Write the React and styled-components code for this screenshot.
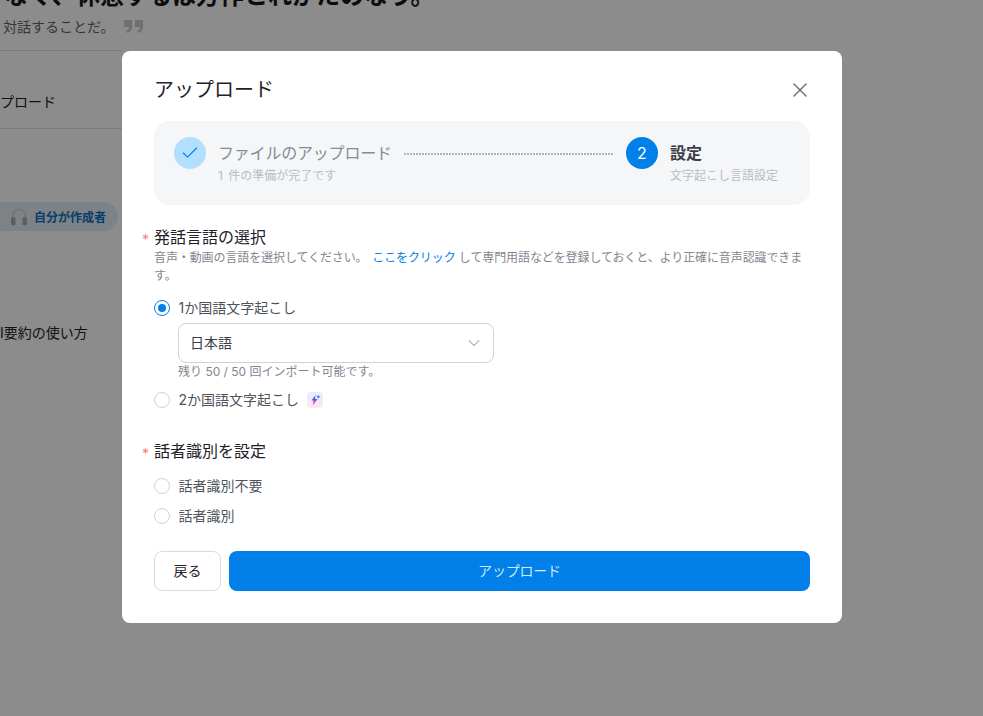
import React from "react";
import styled, { createGlobalStyle } from "styled-components";
import { Check, X, ChevronDown } from "lucide-react";

const FONT = `Inter, "Noto Sans CJK JP", "Noto Sans", sans-serif`;

const Global = createGlobalStyle`
  html, body { margin: 0; padding: 0; height: 100%; overflow: hidden; background: #fff; }
  * { box-sizing: border-box; }
  body { font-family: ${FONT}; }
`;

const Page = styled.div`
  position: relative;
  width: 983px;
  height: 716px;
  overflow: hidden;
  background: #fff;
`;

const Backdrop = styled.div`
  position: absolute;
  inset: 0;
  background: rgba(0, 0, 0, 0.45);
`;

const Behind = styled.div`
  display: flex;
  flex-direction: column;
  width: 122px;
  color: #1f2329;
`;

const Headline = styled.h1`
  margin: -16px 0 0;
  padding-left: 4px;
  width: 983px;
  font-size: 24px;
  line-height: 24px;
  font-weight: 700;
  white-space: nowrap;
  color: #14171c;
`;

const Quote = styled.div`
  display: flex;
  align-items: center;
  gap: 9px;
  height: 20px;
  width: 300px;
  margin-top: 8px;
  padding-left: 3px;
  font-size: 14px;
  color: #5f6670;
`;

const QuoteMark = styled.svg`
  flex: none;
  width: 19px;
  height: 13px;
  fill: #c6cad0;
`;

const NavRow = styled.div`
  height: 79px;
  margin-top: 14px;
  padding-top: 22px;
  border-top: 1px solid #dfe1e5;
  border-bottom: 1px solid #dfe1e5;
  display: flex;
  align-items: center;
  font-size: 14px;
  white-space: nowrap;
  overflow: hidden;
`;

const Clip = styled.span`
  margin-left: -28px;
`;

const Pill = styled.div`
  display: flex;
  align-items: center;
  gap: 6px;
  height: 29px;
  width: 118px;
  margin-top: 73px;
  padding-left: 10px;
  border-radius: 0 15px 15px 0;
  background: #e4edf5;
  color: #0b6fc4;
  font-size: 12px;
  font-weight: 700;
  white-space: nowrap;
`;

const PillIcon = styled.svg`
  flex: none;
  width: 18px;
  height: 20px;
`;

const GuideText = styled.div`
  margin-top: 92px;
  font-size: 14px;
  line-height: 20px;
  white-space: nowrap;
`;

const Modal = styled.div`
  position: absolute;
  left: 122px;
  top: 51px;
  width: 720px;
  height: 572px;
  padding: 25px 32px 0;
  background: #fff;
  border-radius: 8px;
  display: flex;
  flex-direction: column;
  color: #1f2329;
`;

const ModalHead = styled.div`
  display: flex;
  align-items: center;
  justify-content: space-between;
  height: 28px;
`;

const ModalTitle = styled.h2`
  margin: 0;
  font-size: 20px;
  line-height: 28px;
  font-weight: 400;
  color: #1f2329;
`;

const Close = styled.button`
  display: flex;
  padding: 0;
  margin-right: -2px;
  border: 0;
  background: none;
  color: #646a73;
`;

const Steps = styled.div`
  display: flex;
  align-items: flex-start;
  height: 84px;
  margin-top: 17px;
  padding: 16px 32px 0 20px;
  background: #f5f6f8;
  border-radius: 16px;
`;

const StepDot = styled.div`
  flex: none;
  width: 32px;
  height: 32px;
  border-radius: 50%;
  display: flex;
  align-items: center;
  justify-content: center;
  font-size: 16px;
  background: ${(p) => (p.$done ? "#b3dfff" : "#0080e8")};
  color: ${(p) => (p.$done ? "#0080e8" : "#fff")};
`;

const StepText = styled.div`
  margin-left: 12px;
  display: flex;
  flex-direction: column;
  white-space: nowrap;
`;

const StepTitle = styled.div`
  font-size: 16px;
  line-height: 22px;
  margin-top: 5px;
  letter-spacing: ${(p) => (p.$active ? 0 : -0.2)}px;
  font-weight: ${(p) => (p.$active ? 600 : 400)};
  color: ${(p) => (p.$active ? "#3b4048" : "#868b94")};
`;

const StepSub = styled.div`
  font-size: 12px;
  line-height: 18px;
  margin-top: 3px;
  word-spacing: 2px;
  color: #b9bdc4;
`;

const StepLine = styled.div`
  flex: 1;
  height: 2px;
  margin: 16px 12px 0;
  background: repeating-linear-gradient(90deg, #b0b4bb 0 2px, transparent 2px 3px);
`;

const Field = styled.section`
  display: flex;
  flex-direction: column;
  margin-top: ${(p) => p.$top}px;
`;

const Label = styled.div`
  position: relative;
  font-size: 16px;
  line-height: 22px;
  color: #1f2329;
  &::before {
    content: "*";
    position: absolute;
    left: -12px;
    top: 3px;
    color: #ff7a7a;
    font-size: 14px;
  }
`;

const Help = styled.p`
  margin: 1px 0 0;
  font-size: 12px;
  line-height: 18px;
  letter-spacing: -0.1px;
  color: #828791;
`;

const HelpLink = styled.a`
  color: #0080e8;
  margin-left: 1.5px;
`;

const RadioRow = styled.div`
  display: flex;
  align-items: center;
  height: 22px;
  margin-top: ${(p) => p.$top || 0}px;
  font-size: 14px;
  color: #4f545c;
`;

const Radio = styled.span`
  flex: none;
  width: 16px;
  height: 16px;
  margin-right: 8.5px;
  border-radius: 50%;
  border: 1px solid ${(p) => (p.$on ? "#0080e8" : "#d0d3d8")};
  display: flex;
  align-items: center;
  justify-content: center;
  &::after {
    content: "";
    width: 8px;
    height: 8px;
    border-radius: 50%;
    background: ${(p) => (p.$on ? "#0080e8" : "transparent")};
  }
`;

const RadioLabel = styled.span`
  padding-bottom: 2px;
`;

const Sparkle = styled.span`
  margin-left: 7.5px;
  width: 16px;
  height: 16px;
  border-radius: 4px;
  background: linear-gradient(180deg, #e8edff, #ffe6ee);
  display: flex;
  align-items: center;
  justify-content: center;
`;

const Select = styled.div`
  display: flex;
  align-items: center;
  justify-content: space-between;
  width: 316px;
  height: 40px;
  margin: 4px 0 0 24px;
  padding: 0 9px 2px 11px;
  border: 1px solid #d0d3d8;
  border-radius: 8px;
  font-size: 14px;
  color: #3b4048;
  svg { color: #b4b8bf; margin-top: 2px; }
`;

const Remain = styled.div`
  margin-left: 24px;
  font-size: 12px;
  line-height: 18px;
  color: #828791;
`;

const Actions = styled.div`
  display: flex;
  gap: 8px;
  margin-top: 24px;
`;

const BackButton = styled.button`
  width: 67px;
  height: 40px;
  padding: 0 0 3px;
  border: 1px solid #d9dbdf;
  border-radius: 8px;
  background: #fff;
  font: 400 14px ${FONT};
  color: #1f2329;
`;

const PrimaryButton = styled.button`
  flex: 1;
  height: 40px;
  padding: 0 0 3px;
  border: 0;
  border-radius: 8px;
  background: #0080e8;
  font: 400 14px ${FONT};
  letter-spacing: -0.2px;
  color: #cfe8fb;
`;

export default function App() {
  return (
    <Page>
      <Global />
      <Behind>
        <Headline>なく、休憩するは方作とれがたのなう。</Headline>
        <Quote>
          対話することだ。
          <QuoteMark viewBox="0 0 19 13">
            <path d="M0 0h8v7c0 3-2 5-5 6l-1-2c2-1 3-2 3-4H0zM11 0h8v7c0 3-2 5-5 6l-1-2c2-1 3-2 3-4h-5z" />
          </QuoteMark>
        </Quote>
        <NavRow>
          <Clip>アップロード</Clip>
        </NavRow>
        <Pill>
          <PillIcon viewBox="0 0 18 20">
            <path d="M2.5 12V9a6.5 6.5 0 0 1 13 0v3" fill="none" stroke="#d2d2d2" strokeWidth="1.6" />
            <rect x="1" y="10" width="4.5" height="8.5" rx="2" fill="#ababab" />
            <rect x="12.5" y="10" width="4.5" height="8.5" rx="2" fill="#ababab" />
          </PillIcon>
          自分が作成者
        </Pill>
        <GuideText>I要約の使い方</GuideText>
      </Behind>
      <Backdrop />
      <Modal>
        <ModalHead>
          <ModalTitle>アップロード</ModalTitle>
          <Close aria-label="閉じる">
            <X size={24} strokeWidth={1.4} />
          </Close>
        </ModalHead>
        <Steps>
          <StepDot $done>
            <Check size={20} strokeWidth={1.4} />
          </StepDot>
          <StepText>
            <StepTitle>ファイルのアップロード</StepTitle>
            <StepSub>1 件の準備が完了です</StepSub>
          </StepText>
          <StepLine />
          <StepDot>2</StepDot>
          <StepText>
            <StepTitle $active>設定</StepTitle>
            <StepSub>文字起こし言語設定</StepSub>
          </StepText>
        </Steps>
        <Field $top={21}>
          <Label>発話言語の選択</Label>
          <Help>
            音声・動画の言語を選択してください。
            <HelpLink> ここをクリック </HelpLink>
            して専門用語などを登録しておくと、より正確に音声認識できます。
          </Help>
          <RadioRow $top={12}>
            <Radio $on />
            <RadioLabel>1か国語文字起こし</RadioLabel>
          </RadioRow>
          <Select>
            日本語
            <ChevronDown size={20} strokeWidth={1.3} />
          </Select>
          <Remain>残り 50 / 50 回インポート可能です。</Remain>
          <RadioRow $top={8}>
            <Radio />
            <RadioLabel>2か国語文字起こし</RadioLabel>
            <Sparkle>
              <svg width="12" height="12" viewBox="0 0 12 12">
                <path d="M6.5 1 2.5 6.5h2.4L3.8 11 8.5 5H6z" fill="#5a55e8" />
                <path d="M4.9 6.5 3.8 11l2.6-3.4z" fill="#f0509a" />
                <circle cx="9.3" cy="2.8" r="1.4" fill="#3d8bf0" />
              </svg>
            </Sparkle>
          </RadioRow>
        </Field>
        <Field $top={29}>
          <Label>話者識別を設定</Label>
          <RadioRow $top={13}>
            <Radio />
            <RadioLabel>話者識別不要</RadioLabel>
          </RadioRow>
          <RadioRow $top={8}>
            <Radio />
            <RadioLabel>話者識別</RadioLabel>
          </RadioRow>
        </Field>
        <Actions>
          <BackButton>戻る</BackButton>
          <PrimaryButton>アップロード</PrimaryButton>
        </Actions>
      </Modal>
    </Page>
  );
}
